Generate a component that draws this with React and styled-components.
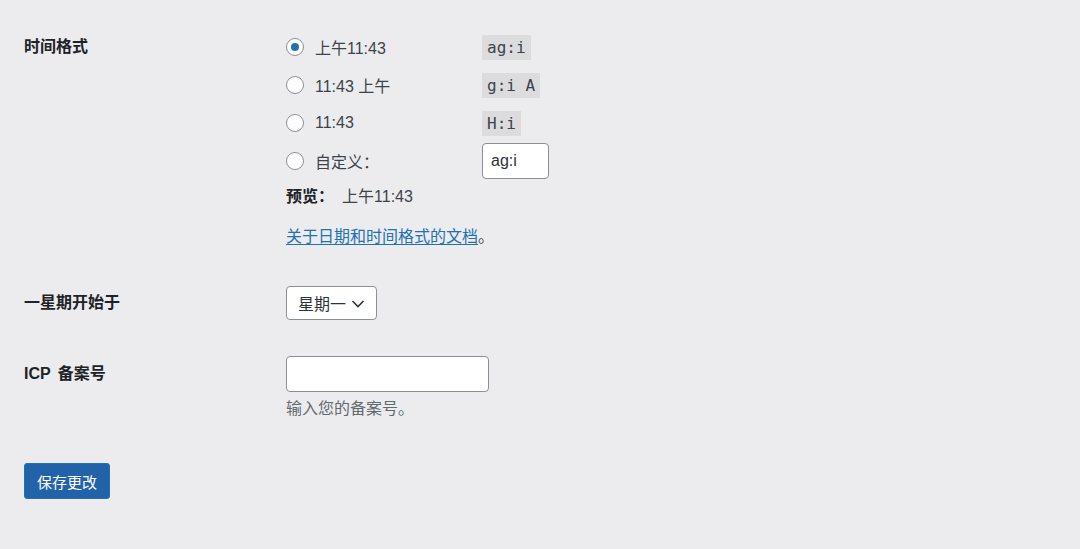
import React, { useState } from "react"
import styled, { createGlobalStyle } from "styled-components"

const Global = createGlobalStyle`
  html, body {
    margin: 0;
    background: #ececef;
  }
  body {
    font-family: "Liberation Sans", "Noto Sans CJK SC", sans-serif;
    font-size: 16px;
    color: #3c434a;
  }
`

const Page = styled.div`
  padding: 28px 24px 40px;
`

const Row = styled.div`
  display: grid;
  grid-template-columns: 262px 1fr;
  margin-top: ${props => props.gap || 0}px;
`

const Label = styled.div`
  font-weight: bold;
  color: #1d2327;
  line-height: ${props => props.lh || 38}px;
  word-spacing: 3px;
`

const Field = styled.div`
  display: flex;
  flex-direction: column;
`

const Option = styled.label`
  display: flex;
  align-items: center;
  height: 38px;
  cursor: pointer;
`

const Radio = styled.input`
  appearance: none;
  margin: 0 11px 0 0;
  width: 18px;
  height: 18px;
  border: 1px solid #8c8f94;
  border-radius: 50%;
  background: #fff;
  display: grid;
  place-items: center;
  box-sizing: border-box;
  flex-shrink: 0;

  &:checked::before {
    content: "";
    width: 8px;
    height: 8px;
    border-radius: 50%;
    background: #2271b1;
  }
`

const OptText = styled.span`
  width: 167px;
  color: #3c434a;
`

const Code = styled.code`
  font-family: "DejaVu Sans Mono", monospace;
  font-size: 16px;
  background: #dcdcde;
  padding: 0 5px;
  height: 25px;
  line-height: 25px;
  color: #3c434a;
`

const TextInput = styled.input`
  box-sizing: border-box;
  width: ${props => props.w}px;
  height: ${props => props.h}px;
  border: 1px solid #8c8f94;
  border-radius: 4px;
  background: #fff;
  font-family: "Liberation Sans", "Noto Sans CJK SC", sans-serif;
  font-size: 16px;
  color: #2c3338;
  padding: 0 8px;
  outline: none;
`

const Preview = styled.p`
  margin: 5px 0 0;
  line-height: 24px;
  color: #3c434a;

  strong {
    color: #1d2327;
    margin-right: 8px;
  }
`

const DocLine = styled.p`
  margin: 16px 0 0;
  line-height: 24px;

  a {
    color: #2271b1;
    text-decoration: underline;
    text-underline-offset: 2px;
  }
`

const SelectBox = styled.div`
  box-sizing: border-box;
  width: 91px;
  height: 34px;
  border: 1px solid #8c8f94;
  border-radius: 4px;
  background: #fff;
  display: flex;
  align-items: center;
  padding: 0 6px 0 11px;
  gap: 3px;
  color: #2c3338;
  cursor: pointer;
`

const Desc = styled.p`
  margin: 5px 0 0;
  line-height: 24px;
  color: #646970;
`

const SaveButton = styled.button`
  margin-top: 42px;
  height: 36px;
  padding: 0 12px;
  border: 1px solid #2271b1;
  border-radius: 3px;
  background: #2162a8;
  color: #fff;
  font-family: "Liberation Sans", "Noto Sans CJK SC", sans-serif;
  font-size: 15px;
  cursor: pointer;
`

const options = [
  { text: "上午11:43", code: "ag:i" },
  { text: "11:43 上午", code: "g:i A" },
  { text: "11:43", code: "H:i" },
]

export default function App() {
  const [fmt, setFmt] = useState(0)

  return (
    <Page>
      <Global />
      <Row>
        <Label>时间格式</Label>
        <Field>
          {options.map((o, i) => (
            <Option key={o.code}>
              <Radio type="radio" name="tf" checked={fmt === i} onChange={() => setFmt(i)} />
              <OptText>{o.text}</OptText>
              <Code>{o.code}</Code>
            </Option>
          ))}
          <Option>
            <Radio type="radio" name="tf" checked={fmt === 3} onChange={() => setFmt(3)} />
            <OptText>自定义：</OptText>
            <TextInput w={67} h={36} defaultValue="ag:i" />
          </Option>
          <Preview><strong>预览：</strong>上午11:43</Preview>
          <DocLine><a href="#">关于日期和时间格式的文档</a>。</DocLine>
        </Field>
      </Row>

      <Row gap={37}>
        <Label lh={34}>一星期开始于</Label>
        <Field>
          <SelectBox>
            星期一
            <svg width="18" height="18" viewBox="0 0 18 18">
              <path d="M3.5 7l5.5 5.5 5.5-5.5" fill="none" stroke="#2c3338" strokeWidth="1.6" />
            </svg>
          </SelectBox>
        </Field>
      </Row>

      <Row gap={36}>
        <Label lh={36}>ICP 备案号</Label>
        <Field>
          <TextInput w={203} h={36} />
          <Desc>输入您的备案号。</Desc>
        </Field>
      </Row>

      <SaveButton>保存更改</SaveButton>
    </Page>
  )
}
